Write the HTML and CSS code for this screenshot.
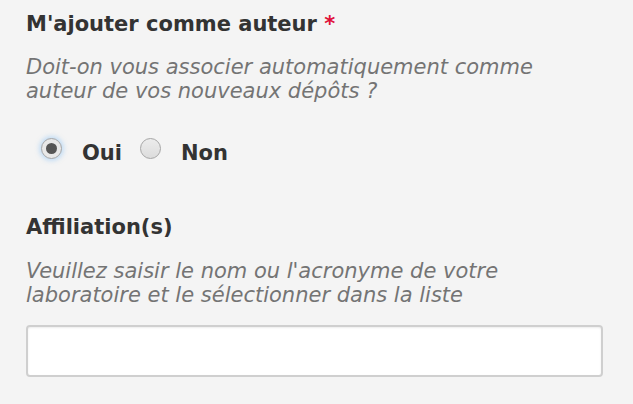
FILE: index.html
```
<!DOCTYPE html>
<html lang="fr">
<head>
<meta charset="utf-8">
<link rel="stylesheet" href="styles.css">
</head>
<body>
<form class="form">
  <div class="field">
    <div class="label">M'ajouter comme auteur <span class="req">*</span></div>
    <p class="help">Doit-on vous associer automatiquement comme<br>auteur de vos nouveaux dépôts ?</p>
    <div class="radios">
      <label class="opt"><span class="radio checked"><span class="dot"></span></span><span class="opt-text">Oui</span></label>
      <label class="opt"><span class="radio"></span><span class="opt-text">Non</span></label>
    </div>
  </div>
  <div class="field field2">
    <div class="label">Affiliation(s)</div>
    <p class="help help2">Veuillez saisir le nom ou l'acronyme de votre<br>laboratoire et le sélectionner dans la liste</p>
    <div class="input"></div>
  </div>
</form>
</body>
</html>
```
FILE: styles.css
```
html, body {
  margin: 0;
  padding: 0;
  background: #f4f4f4;
  width: 633px;
  height: 404px;
  overflow: hidden;
  font-family: "DejaVu Sans", Verdana, sans-serif;
  color: #333;
}
.form {
  padding: 12px 0 0 26px;
}
.label {
  font-weight: bold;
  font-size: 21px;
  line-height: 24px;
  color: #333;
}
.req {
  color: #e0103a;
}
.help {
  margin: 19px 0 0 0;
  font-style: italic;
  font-size: 21px;
  line-height: 24px;
  color: #747474;
}
.help2 {
  margin-top: 20px;
}
.radios {
  display: flex;
  align-items: center;
  margin-top: 35px;
  padding-left: 15px;
  gap: 18px;
}
.opt {
  display: flex;
  align-items: center;
  gap: 20px;
}
.opt-text {
  font-weight: bold;
  font-size: 21px;
  line-height: 24px;
  color: #333;
}
.radio {
  box-sizing: border-box;
  width: 21px;
  height: 21px;
  margin-bottom: 8px;
  border-radius: 50%;
  border: 1px solid #a6a6a6;
  background: linear-gradient(#ececec, #dcdcdc);
  display: flex;
  align-items: center;
  justify-content: center;
}
.radio.checked {
  background: #e8e8e8;
  box-shadow: 0 0 4px 2px rgba(150, 200, 245, 0.5);
}
.dot {
  width: 11px;
  height: 11px;
  border-radius: 50%;
  background: #555;
}
.field2 {
  margin-top: 48px;
}
.input {
  box-sizing: border-box;
  margin-top: 18px;
  width: 577px;
  height: 52px;
  background: #fff;
  border: 2px solid #cfcfcf;
  border-radius: 4px;
  box-shadow: inset 0 1px 2px rgba(0,0,0,0.08);
}
```
